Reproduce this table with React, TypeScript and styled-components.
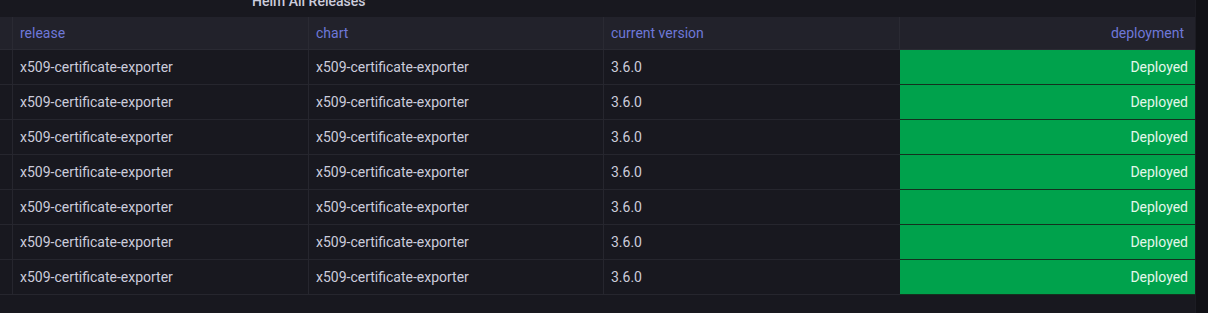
import styled, { createGlobalStyle } from "styled-components";

const GlobalStyle = createGlobalStyle`
  body {
    margin: 0;
    background: #111116;
    font-family: Roboto, "Noto Sans", sans-serif;
  }
`;

const rows = Array.from({ length: 7 }, () => ({
  release: "x509-certificate-exporter",
  chart: "x509-certificate-exporter",
  version: "3.6.0",
  deployment: "Deployed",
}));

const columns = "12px 296px 295px 296px 296px";

function App() {
  return (
    <>
      <GlobalStyle />
      <Page>
        <Panel>
          <TitleBar>
            <Title>Helm All Releases</Title>
          </TitleBar>
          <Table>
            <HeaderRow>
              <Gutter />
              <HeadCell>release</HeadCell>
              <HeadCell>chart</HeadCell>
              <HeadCell>current version</HeadCell>
              <HeadCell $right>deployment</HeadCell>
            </HeaderRow>
            {rows.map((r, i) => (
              <Row key={i}>
                <Gutter />
                <Cell>{r.release}</Cell>
                <Cell>{r.chart}</Cell>
                <Cell>{r.version}</Cell>
                <StatusCell>{r.deployment}</StatusCell>
              </Row>
            ))}
          </Table>
        </Panel>
        <Strip />
      </Page>
    </>
  );
}

const Page = styled.div`
  display: flex;
  width: 1208px;
  height: 313px;
  overflow: hidden;
`;

const Panel = styled.div`
  width: 1195px;
  background: #18181f;
  display: flex;
  flex-direction: column;
`;

const Strip = styled.div`
  flex: 1;
  background: #111116;
  border-left: 1px solid #1c1c23;
`;

const TitleBar = styled.div`
  height: 17px;
  overflow: hidden;
  padding-left: 252px;
`;

const Title = styled.div`
  margin-top: -9px;
  font-size: 14px;
  line-height: 20px;
  font-weight: 500;
  color: #ccccdc;
`;

const Table = styled.div`
  display: flex;
  flex-direction: column;
`;

const HeaderRow = styled.div`
  display: grid;
  grid-template-columns: ${columns};
  height: 32px;
  background: #22222b;
  border-bottom: 1px solid #2a2a33;
`;

const Row = styled.div`
  display: grid;
  grid-template-columns: ${columns};
  height: 34px;
  border-bottom: 1px solid #26262e;
`;

const Gutter = styled.div``;

const HeadCell = styled.div<{ $right?: boolean }>`
  display: flex;
  align-items: center;
  justify-content: ${(p) => (p.$right ? "flex-end" : "flex-start")};
  padding: 0 ${(p) => (p.$right ? "11px" : "7px")};
  border-left: 1px solid #2a2a33;
  font-size: 14px;
  color: #6e78d8;
  white-space: nowrap;
`;

const Cell = styled.div`
  display: flex;
  align-items: center;
  padding: 0 7px;
  border-left: 1px solid #26262e;
  font-size: 14px;
  color: #ccccdc;
  white-space: nowrap;
`;

const StatusCell = styled.div`
  display: flex;
  align-items: center;
  justify-content: flex-end;
  padding: 0 7px;
  margin: 0 0 -1px 1px;
  background: #00a24c;
  border-bottom: 1px solid #14311f;
  font-size: 14px;
  color: #e4f7ea;
  white-space: nowrap;
`;

export default App;
